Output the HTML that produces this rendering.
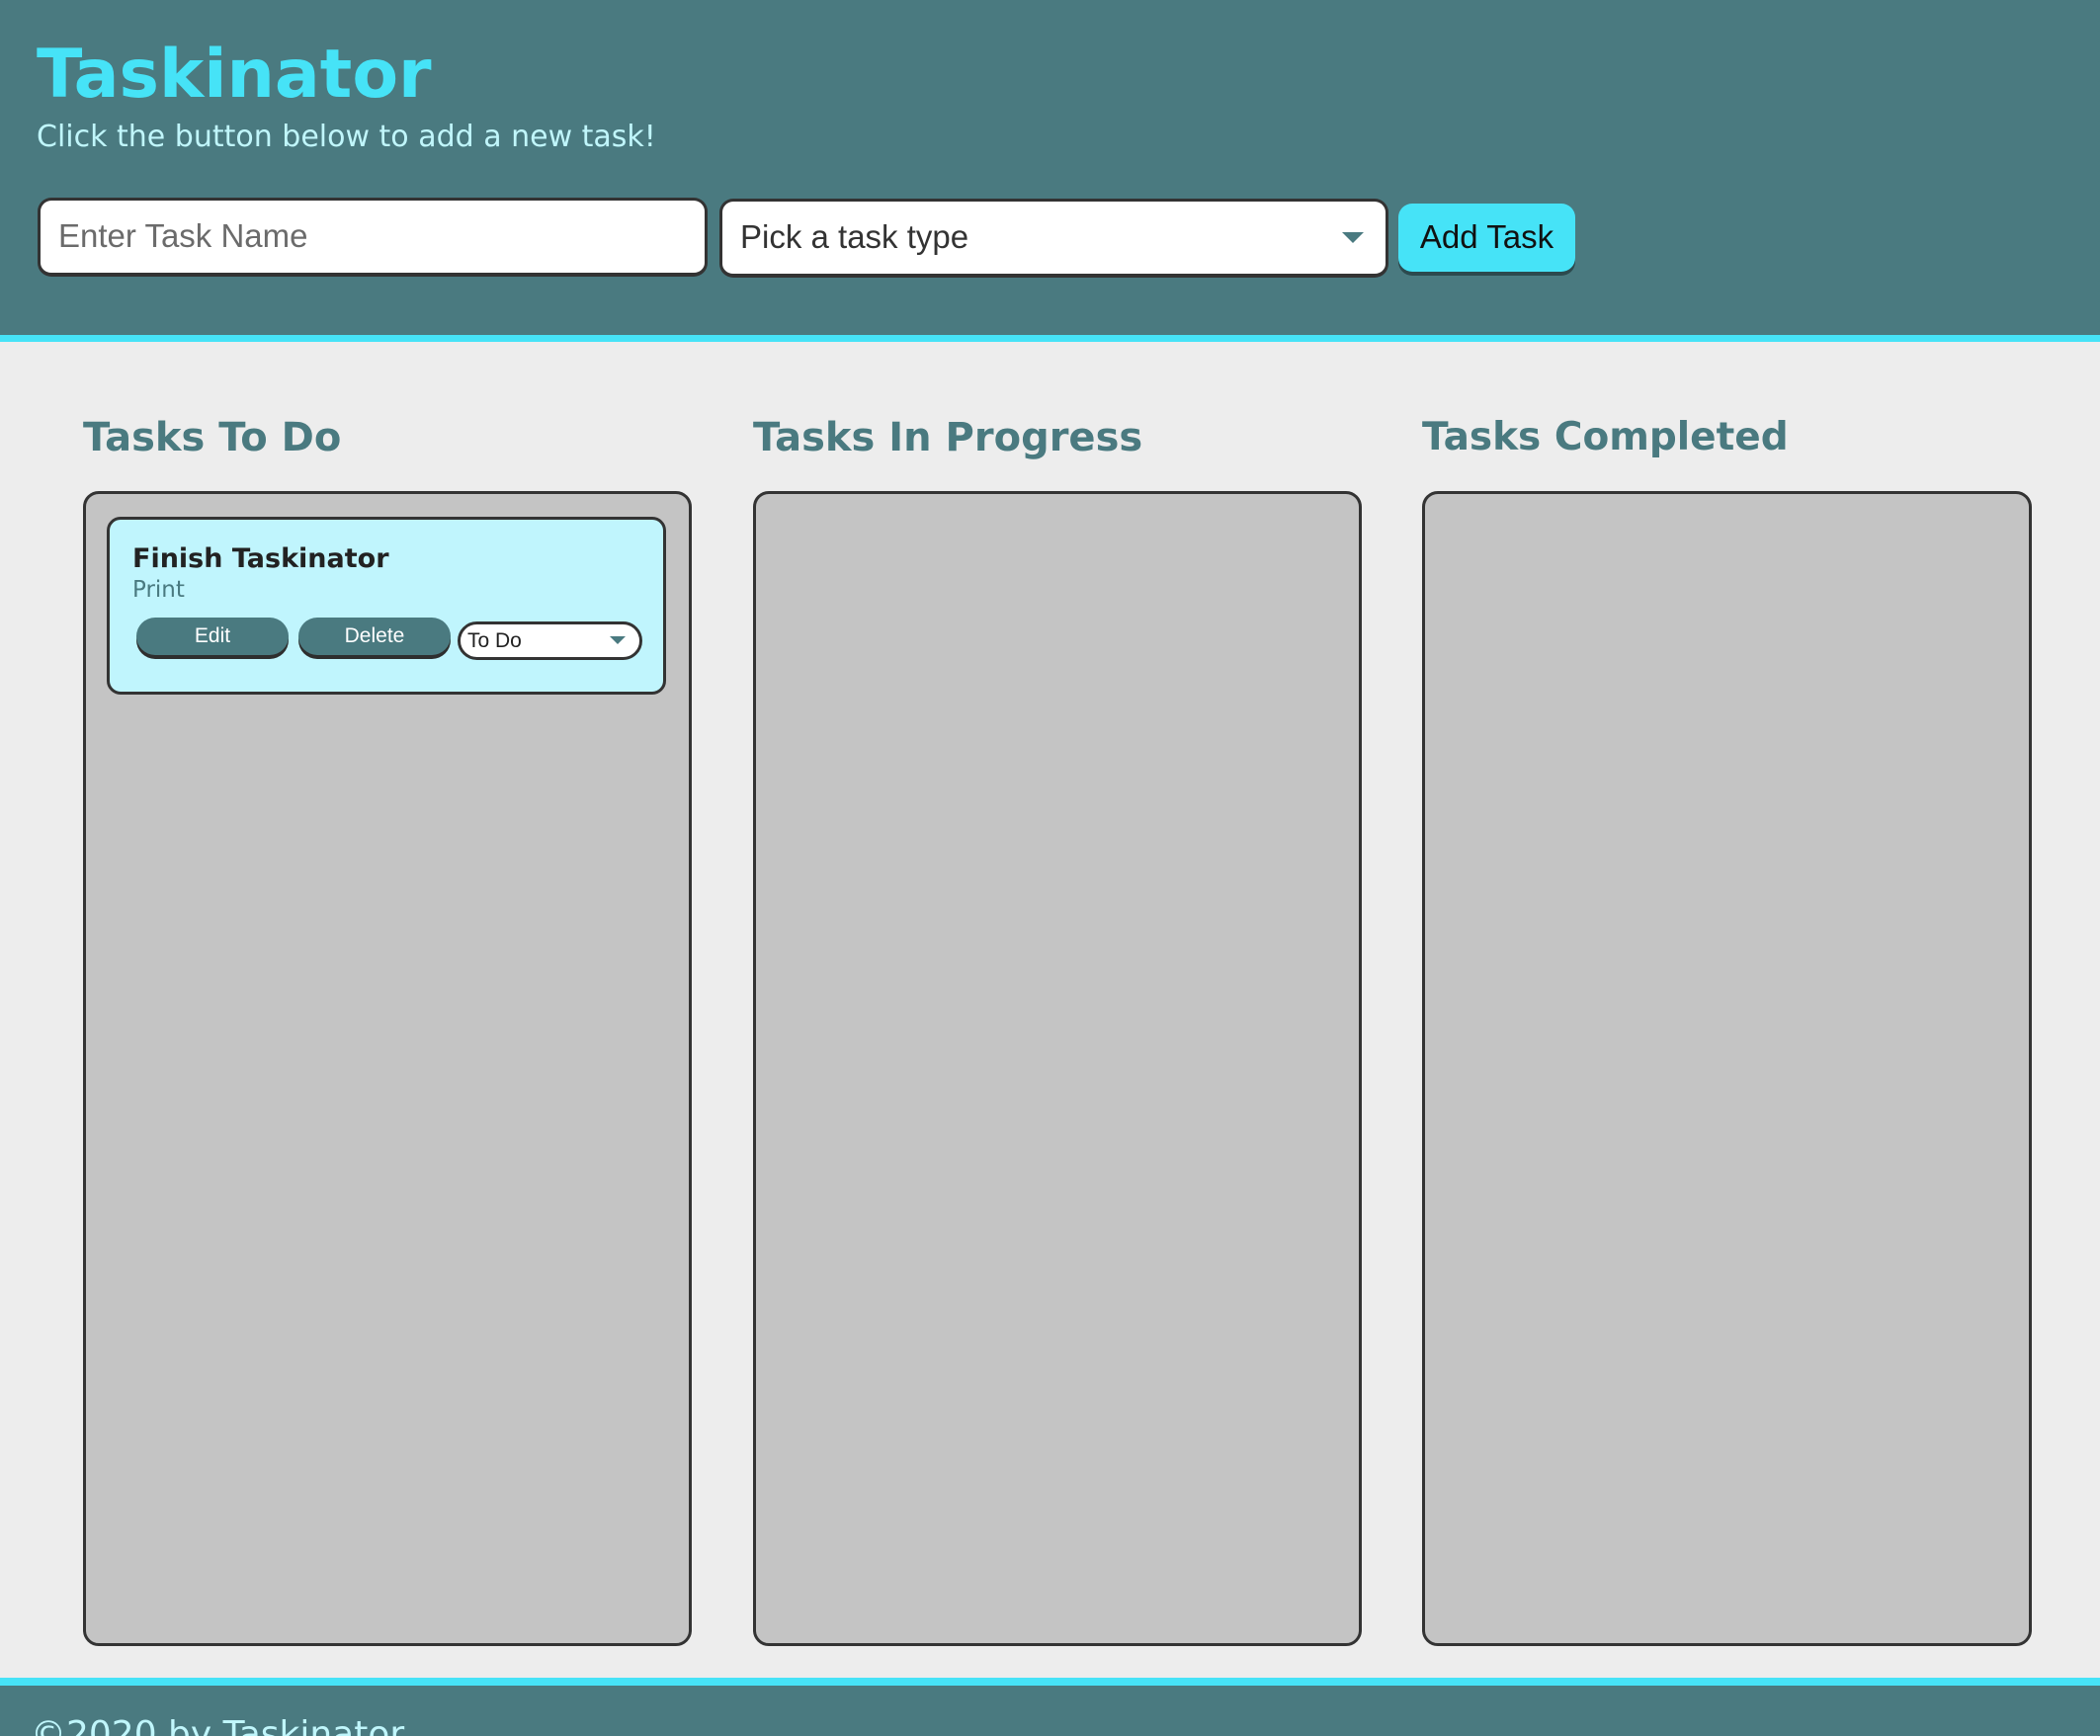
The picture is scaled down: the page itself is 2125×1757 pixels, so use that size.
<!DOCTYPE html>
<html style="overflow:hidden;height:1757px"><head><meta charset="utf-8"><style>
*{box-sizing:border-box;margin:0;padding:0}
body{width:2125px;height:1757px;overflow:hidden;background:#ededed;position:relative;font-family:"DejaVu Sans",sans-serif}
.a{position:absolute}
header{position:absolute;left:0;top:0;width:2125px;height:346px;background:#4a7a80;border-bottom:7px solid #46e3f7}
h1{position:absolute;left:37px;top:31px;font-size:68px;font-weight:bold;color:#46e3f7;line-height:90px}
.sub{left:37px;top:119px;font-size:30px;color:#c0f6fb;line-height:40px}
.inp{background:#fff;border:3px solid #333;border-bottom-width:4px;border-radius:14px;font-family:"Liberation Sans",sans-serif;font-size:33px;line-height:72px;padding-left:18px}
.btn{background:#46e3f7;border-radius:14px;box-shadow:0 4px 0 #2c4a4e;font-family:"Liberation Sans",sans-serif;font-size:33px;color:#111;text-align:center;line-height:68px}
h2{position:absolute;font-size:40px;font-weight:bold;color:#4a7a80;line-height:50px}
.col{background:#c4c4c4;border:3px solid #333;border-radius:16px;top:497px;height:1169px}
.card{left:108px;top:523px;width:566px;height:180px;background:#c0f5fd;border:3px solid #333;border-radius:14px}
.cb{background:#4a7a80;color:#fff;border-radius:20px;box-shadow:0 4px 0 #2e2e2e;font-family:"Liberation Sans",sans-serif;font-size:21px;text-align:center;line-height:38px;height:38px;top:625px}
footer{position:absolute;left:0;top:1698px;width:2125px;height:59px;background:#4a7a80;border-top:8px solid #46e3f7;overflow:hidden}
.tri{width:0;height:0;border-left:11px solid transparent;border-right:11px solid transparent;border-top:11px solid #4a7a80}
</style></head><body>
<header>
<h1>Taskinator</h1>
<div class="a sub">Click the button below to add a new task!</div>
<div class="a inp" style="left:38px;top:200px;width:678px;height:80px;color:#6b6b6b">Enter Task Name</div>
<div class="a inp" style="left:728px;top:201px;width:677px;height:80px;color:#333">Pick a task type</div>
<div class="a tri" style="left:1358px;top:235px"></div>
<div class="a btn" style="left:1415px;top:206px;width:179px;height:69px">Add Task</div>
</header>
<h2 style="left:84px;top:418px">Tasks To Do</h2>
<h2 style="left:762px;top:418px">Tasks In Progress</h2>
<h2 style="left:1439px;top:418px;font-size:39px">Tasks Completed</h2>
<div class="a col" style="left:84px;width:616px"></div>
<div class="a col" style="left:762px;width:616px"></div>
<div class="a col" style="left:1439px;width:617px"></div>
<div class="a card"></div>
<div class="a" style="left:134px;top:549px;font-size:27px;font-weight:bold;color:#222;line-height:34px">Finish Taskinator</div>
<div class="a" style="left:134px;top:582px;font-size:23px;color:#4a7a80;line-height:30px">Print</div>
<div class="a cb" style="left:138px;width:154px">Edit</div>
<div class="a cb" style="left:302px;width:154px">Delete</div>
<div class="a" style="left:463px;top:629px;width:187px;height:39px;background:#fff;border:3px solid #333;border-radius:20px;font-family:'Liberation Sans',sans-serif;font-size:21px;line-height:33px;padding-left:7px;color:#222">To Do</div>
<div class="a tri" style="left:617px;top:644px;border-left-width:8px;border-right-width:8px;border-top-width:8px"></div>
<footer><div class="a" style="left:31px;top:28px;font-size:36px;color:#c0f6fb;line-height:44px;white-space:nowrap">©2020 by Taskinator</div></footer>
</body></html>
